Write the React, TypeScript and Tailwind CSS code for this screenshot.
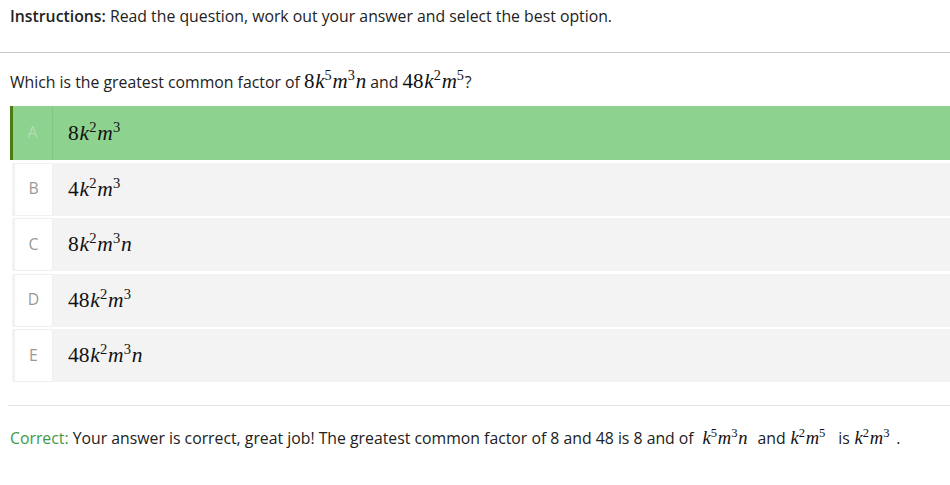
import React from 'react';

const OPTIONS = [
  { letter: 'A', coef: '8', n: false, m: '3' },
  { letter: 'B', coef: '4', n: false, m: '3' },
  { letter: 'C', coef: '8', n: true, m: '3' },
  { letter: 'D', coef: '48', n: false, m: '3' },
  { letter: 'E', coef: '48', n: true, m: '3' },
];

const SANS = "font-['Open_Sans',_'Noto_Sans',_sans-serif]";
const SERIF = "font-['Liberation_Serif',_'DejaVu_Serif',_serif]";

// a monomial like 8k^2m^3n, typeset roughly like KaTeX
const Term = ({ coef, k, m, n, size = 'text-[21.5px]' }: { coef?: string; k: string; m: string; n?: boolean; size?: string }) => (
  <span className={`${SERIF} ${size} text-[#111] whitespace-nowrap`}>
    {coef}
    <i className="ml-[0.04em]">k</i>
    <sup className="text-[0.68em] -top-[0.55em] mr-[0.06em]">{k}</sup>
    <i>m</i>
    <sup className="text-[0.68em] -top-[0.55em] mr-[0.06em]">{m}</sup>
    {n && <i>n</i>}
  </span>
);

const App: React.FC = () => {
  return (
    <div className={`w-[950px] h-[485px] bg-white text-[#222] ${SANS} text-[15.8px]`}>
      <div className="h-[53px] pl-[10px] pt-[5px] border-b border-[#c8c8c8]">
        <span className="font-semibold">Instructions:</span> Read the question, work out your answer and select the best option.
      </div>

      <div className="pl-[10px] pt-[13px] h-[53px]">
        Which is the greatest common factor of <Term coef="8" k="5" m="3" n size="text-[21px]" /> and{' '}
        <Term coef="48" k="2" m="5" size="text-[21px]" />?
      </div>

      <div className="flex flex-col gap-[2.5px] pl-[10px]">
        {OPTIONS.map((o, i) => {
          const selected = i === 0;
          return selected ? (
            <div key={o.letter} className="flex h-[54px] bg-[#8dd38f] border-l-[3px] border-[#4d7a12]">
              <div className="w-[40px] flex items-center justify-center text-[#b4dcb0] border-r border-[#84c586]">{o.letter}</div>
              <div className="flex items-center pl-[15px]">
                <Term coef={o.coef} k="2" m={o.m} n={o.n} />
              </div>
            </div>
          ) : (
            <div key={o.letter} className="flex h-[53px] bg-[#f3f3f3] border-l-[2px] border-[#f3f3f3] ml-[2px]">
              <div className="w-[39px] flex items-center justify-center bg-white border border-[#f0f0f0] text-[#999]">{o.letter}</div>
              <div className="flex items-center pl-[15px]">
                <Term coef={o.coef} k="2" m={o.m} n={o.n} />
              </div>
            </div>
          );
        })}
      </div>

      <div className="ml-[8px] mt-[23px] border-t border-[#e4e4e4]" />

      <div className="pl-[10px] pt-[19px]">
        <span className="text-[#3d9a4a]">Correct:</span> Your answer is correct, great job! The greatest common factor of 8 and 48 is 8 and of{' '}
        <span className="ml-[4px]"><Term k="5" m="3" n size="text-[18.5px]" /></span>
        <span className="ml-[10px]">and</span> <Term k="2" m="5" size="text-[18.5px]" />
        <span className="ml-[12px]">is</span> <Term k="2" m="3" size="text-[18.5px]" /> <span className="ml-[2px]">.</span>
      </div>
    </div>
  );
};

export default App;
